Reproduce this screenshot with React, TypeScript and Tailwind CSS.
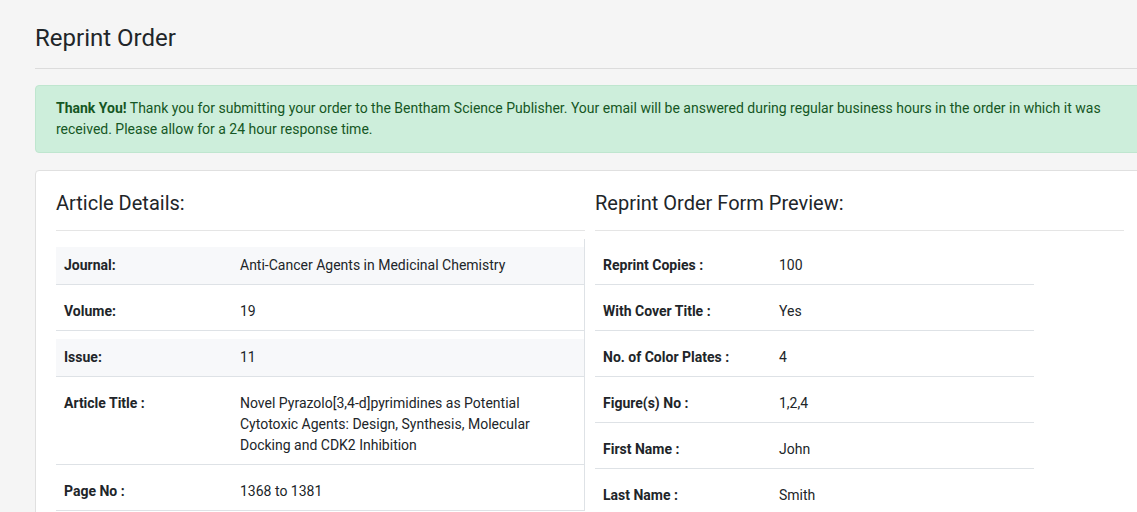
import React from "react";

const articleRows = [
  { label: "Journal:", value: "Anti-Cancer Agents in Medicinal Chemistry", striped: true },
  { label: "Volume:", value: "19" },
  { label: "Issue:", value: "11", striped: true },
  {
    label: "Article Title :",
    value: "Novel Pyrazolo[3,4-d]pyrimidines as Potential Cytotoxic Agents: Design, Synthesis, Molecular Docking and CDK2 Inhibition",
  },
  { label: "Page No :", value: "1368 to 1381" },
];

const orderRows = [
  { label: "Reprint Copies :", value: "100" },
  { label: "With Cover Title :", value: "Yes" },
  { label: "No. of Color Plates :", value: "4" },
  { label: "Figure(s) No :", value: "1,2,4" },
  { label: "First Name :", value: "John" },
  { label: "Last Name :", value: "Smith" },
];

type Row = { label: string; value: string; striped?: boolean };

function DetailRow({ row }: { row: Row }) {
  return (
    <div className="pt-2 border-b border-[#dee2e6]">
      <div className={`flex py-2 ${row.striped ? "bg-[#f7f8fa]" : ""}`}>
        <div className="w-[184px] shrink-0 pl-2 font-bold">{row.label}</div>
        <div className="flex-1 pr-2">{row.value}</div>
      </div>
    </div>
  );
}

export default function App() {
  return (
    <div
      className="min-h-screen w-full overflow-hidden bg-[#f5f5f5] text-[#212529] text-[14px] leading-[21px]"
      style={{ fontFamily: "Roboto, 'Liberation Sans', sans-serif" }}
    >
      <div className="ml-[35px] w-[1110px] pt-[23px]">
        <h1 className="text-[24px] leading-[30px] font-normal">Reprint Order</h1>
        <hr className="mt-[15px] border-0 border-t border-[#dcdcdc]" />

        <div className="mt-4 rounded border border-[#bfe6cf] bg-[#cdeedb] px-5 py-3 text-[#155724]">
          <b>Thank You!</b> Thank you for submitting your order to the Bentham Science Publisher. Your email will be answered
          during regular business hours in the order in which it was received. Please allow for a 24 hour response time.
        </div>

        <div className="mt-[17px] rounded border border-[#e0e0e0] bg-white px-5 pt-5 pb-6">
          <div className="flex gap-[10px]">
            <div className="w-[529px]">
              <h2 className="text-[20px] leading-[24px] font-normal">Article Details:</h2>
              <hr className="mt-[15px] border-0 border-t border-[#e5e5e5]" />
              <div className="mt-2 border-r border-[#dee2e6]">
                {articleRows.map((r) => (
                  <DetailRow key={r.label} row={r} />
                ))}
              </div>
            </div>
            <div className="w-[529px]">
              <h2 className="text-[20px] leading-[24px] font-normal">Reprint Order Form Preview:</h2>
              <hr className="mt-[15px] border-0 border-t border-[#e5e5e5]" />
              <div className="mt-2 w-[439px]">
                {orderRows.map((r) => (
                  <DetailRow key={r.label} row={r} />
                ))}
              </div>
            </div>
          </div>
        </div>
      </div>
    </div>
  );
}
